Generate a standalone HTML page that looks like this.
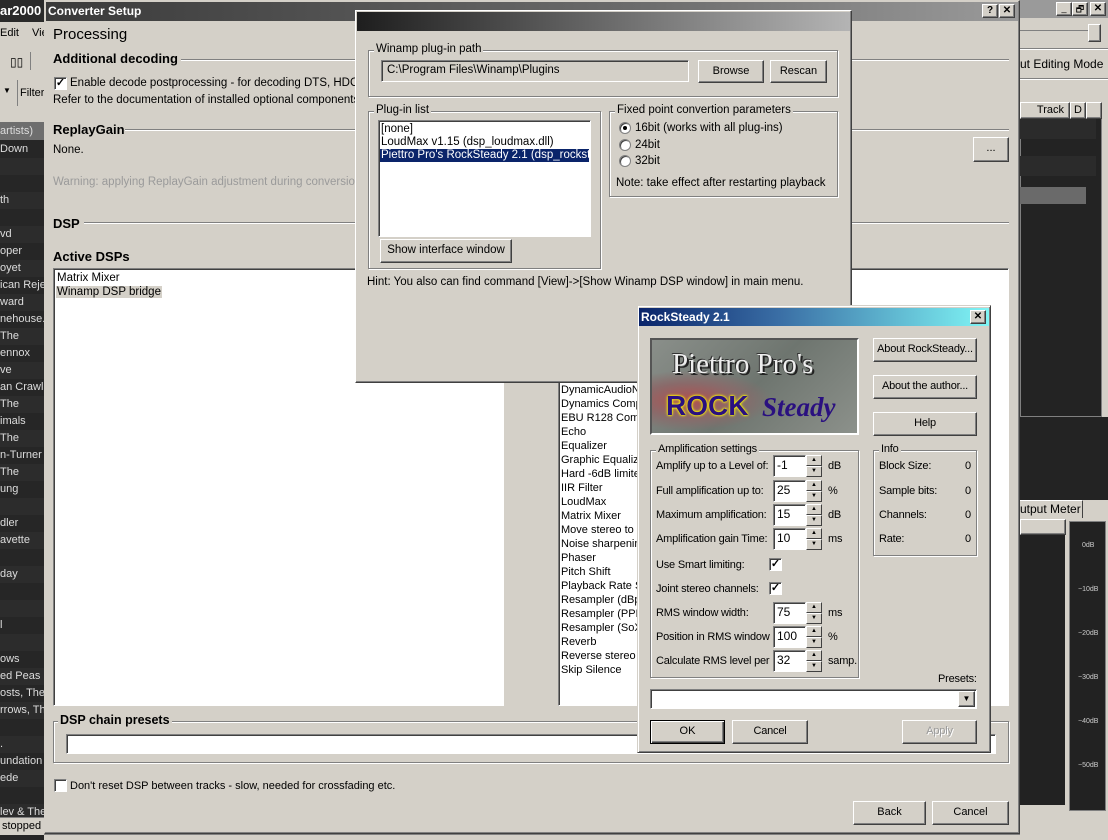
<!DOCTYPE html>
<html><head><meta charset="utf-8">
<style>
*{box-sizing:border-box;margin:0;padding:0}
body{width:1108px;height:840px;position:relative;overflow:hidden;background:#d4d0c8;font-family:"Liberation Sans",sans-serif;font-size:11px;color:#000}
.a{position:absolute}
.t{position:absolute;white-space:nowrap}
.b{position:absolute;background:#d4d0c8;border:1px solid;border-color:#fff #404040 #404040 #fff;box-shadow:inset -1px -1px 0 #808080;text-align:center;white-space:nowrap}
.s{position:absolute;background:#fff;border:1px solid;border-color:#808080 #fff #fff #808080;box-shadow:inset 1px 1px 0 #404040}
.g{position:absolute;border:1px solid #808080;box-shadow:1px 1px 0 #fff,inset 1px 1px 0 #fff}
.gl{position:absolute;background:#d4d0c8;padding:0 2px;white-space:nowrap;top:-8px;left:5px}
.h{position:absolute;height:2px;border-top:1px solid #808080;border-bottom:1px solid #fff}
.cb{position:absolute;width:13px;height:13px;background:#fff;border:1px solid;border-color:#808080 #fff #fff #808080;box-shadow:inset 1px 1px 0 #404040;font-size:11px;line-height:11px;text-align:center;font-weight:bold}
.bold{font-weight:bold;font-size:13px}
.row{position:absolute;left:0;width:44px;height:17px;color:#ddd;font-size:11px;line-height:17px;overflow:hidden;white-space:nowrap}
.spin{position:absolute;width:49px;height:22px}
.spin .f{position:absolute;left:0;top:0;width:33px;height:22px;background:#fff;border:1px solid;border-color:#808080 #fff #fff #808080;box-shadow:inset 1px 1px 0 #404040;padding:2px 0 0 3px;font-size:12px}
.spin .u,.spin .d{position:absolute;left:33px;width:16px;height:11px;background:#d4d0c8;border:1px solid;border-color:#fff #404040 #404040 #fff;font-size:6px;line-height:9px;text-align:center}
.spin .u{top:0}.spin .d{top:11px}
.r{position:absolute;width:12px;height:12px;border-radius:50%;background:#fff;border:1px solid #808080;box-shadow:inset 1px 1px 0 #404040}
.rs{font-size:11px;letter-spacing:-0.2px}
</style></head><body>

<!-- left foobar area -->
<div class="a" style="left:0;top:0;width:44px;height:840px;background:#262626"></div>
<div class="a" style="left:0;top:0;width:44px;height:22px;background:#2a2a2a"></div>
<div class="t" style="left:0;top:3px;color:#fff;font-weight:bold;font-size:13px">ar2000</div>
<div class="a" style="left:0;top:22px;width:44px;height:100px;background:#d4d0c8"></div>
<div class="t" style="left:0;top:27px">Edit</div><div class="t" style="left:32px;top:27px">Vie</div>
<div class="t" style="left:10px;top:55px;font-size:12px">▯▯</div>
<div class="a" style="left:30px;top:52px;width:1px;height:18px;background:#808080"></div>
<div class="t" style="left:3px;top:86px;font-size:8px">▼</div>
<div class="a" style="left:17px;top:80px;width:1px;height:26px;background:#808080"></div>
<div class="t" style="left:20px;top:87px">Filter</div>
<div class="a" style="left:0;top:122px;width:44px;height:18px;background:#6e6e6e"></div>
<div class="t" style="left:0;top:125px;color:#ddd">artists)</div>
<div class="row" style="top:141px">Down</div>
<div class="row" style="top:158px;background:#2c2c2c"></div>
<div class="row" style="top:175px"></div>
<div class="row" style="top:192px;background:#2c2c2c">th</div>
<div class="row" style="top:209px"></div>
<div class="row" style="top:226px;background:#2c2c2c">vd</div>
<div class="row" style="top:243px">oper</div>
<div class="row" style="top:260px;background:#2c2c2c">oyet</div>
<div class="row" style="top:277px">ican Reje</div>
<div class="row" style="top:294px;background:#2c2c2c">ward</div>
<div class="row" style="top:311px">nehouse.</div>
<div class="row" style="top:328px;background:#2c2c2c">The</div>
<div class="row" style="top:345px">ennox</div>
<div class="row" style="top:362px;background:#2c2c2c">ve</div>
<div class="row" style="top:379px">an Crawl</div>
<div class="row" style="top:396px;background:#2c2c2c">The</div>
<div class="row" style="top:413px">imals</div>
<div class="row" style="top:430px;background:#2c2c2c">The</div>
<div class="row" style="top:447px">n-Turner</div>
<div class="row" style="top:464px;background:#2c2c2c"> The</div>
<div class="row" style="top:481px">ung</div>
<div class="row" style="top:498px;background:#2c2c2c"></div>
<div class="row" style="top:515px">dler</div>
<div class="row" style="top:532px;background:#2c2c2c">avette</div>
<div class="row" style="top:549px"></div>
<div class="row" style="top:566px;background:#2c2c2c">day</div>
<div class="row" style="top:583px"></div>
<div class="row" style="top:600px;background:#2c2c2c"></div>
<div class="row" style="top:617px">l</div>
<div class="row" style="top:634px;background:#2c2c2c"></div>
<div class="row" style="top:651px">ows</div>
<div class="row" style="top:668px;background:#2c2c2c">ed Peas</div>
<div class="row" style="top:685px">osts, The</div>
<div class="row" style="top:702px;background:#2c2c2c">rrows, Th</div>
<div class="row" style="top:719px"></div>
<div class="row" style="top:736px;background:#2c2c2c">.</div>
<div class="row" style="top:753px">undation</div>
<div class="row" style="top:770px;background:#2c2c2c">ede</div>
<div class="row" style="top:787px"></div>
<div class="row" style="top:804px;background:#2c2c2c">lev &amp; The</div>
<div class="a" style="left:0;top:817px;width:44px;height:18px;background:#d4d0c8;border-top:1px solid #808080"></div>
<div class="t" style="left:2px;top:820px">stopped</div>

<!-- right foobar area -->
<div class="a" style="left:1020px;top:0;width:88px;height:840px;background:#d4d0c8"></div>
<div class="a" style="left:1020px;top:0;width:88px;height:18px;background:#9a9a9a"></div>
<div class="b" style="left:1056px;top:2px;width:16px;height:14px;font-size:9px;line-height:10px">_</div>
<div class="b" style="left:1072px;top:2px;width:16px;height:14px;font-size:9px;line-height:12px">🗗</div>
<div class="b" style="left:1090px;top:2px;width:16px;height:14px;font-size:10px;line-height:12px;font-weight:bold">✕</div>
<div class="a" style="left:1020px;top:30px;width:70px;height:1px;background:#808080"></div>
<div class="b" style="left:1088px;top:24px;width:13px;height:18px"></div>
<div class="h" style="left:1020px;top:48px;width:88px"></div>
<div class="t" style="left:1020px;top:57px;font-size:12px">ut Editing Mode</div>
<div class="h" style="left:1020px;top:78px;width:88px"></div>
<div class="a" style="left:1020px;top:102px;width:82px;height:315px;background:#232323;border:1px solid #808080"></div>
<div class="a" style="left:1020px;top:417px;width:88px;height:83px;background:#232323"></div>
<div class="b" style="left:1020px;top:102px;width:50px;height:17px;text-align:right;padding-right:5px;line-height:15px">Track</div>
<div class="b" style="left:1070px;top:102px;width:16px;height:17px;line-height:15px">D</div>
<div class="b" style="left:1086px;top:102px;width:16px;height:17px"></div>
<div class="a" style="left:1020px;top:119px;width:76px;height:20px;background:#2b2b2b"></div>
<div class="a" style="left:1020px;top:156px;width:76px;height:20px;background:#2b2b2b"></div>
<div class="a" style="left:1020px;top:187px;width:66px;height:17px;background:#6a6a6a"></div>
<div class="a" style="left:1020px;top:500px;width:63px;height:18px;background:#d4d0c8;border-top:1px solid #fff;border-right:1px solid #404040"></div>
<div class="t" style="left:1020px;top:502px;font-size:12px">utput Meter</div>
<div class="a" style="left:1020px;top:518px;width:88px;height:300px;background:#d4d0c8"></div>
<div class="b" style="left:1020px;top:519px;width:46px;height:16px"></div>
<div class="a" style="left:1020px;top:535px;width:45px;height:270px;background:#222"></div>
<div class="a" style="left:1069px;top:521px;width:37px;height:290px;background:#222;border:1px solid #808080"></div>
<div class="t" style="left:1082px;top:542px;color:#ccc;font-size:7px">0dB</div>
<div class="t" style="left:1078px;top:586px;color:#ccc;font-size:7px">−10dB</div>
<div class="t" style="left:1078px;top:630px;color:#ccc;font-size:7px">−20dB</div>
<div class="t" style="left:1078px;top:674px;color:#ccc;font-size:7px">−30dB</div>
<div class="t" style="left:1078px;top:718px;color:#ccc;font-size:7px">−40dB</div>
<div class="t" style="left:1078px;top:762px;color:#ccc;font-size:7px">−50dB</div>

<!-- Converter Setup dialog -->
<div class="a" style="left:44px;top:0;width:976px;height:834px;background:#d4d0c8;border:1px solid;border-color:#d4d0c8 #404040 #404040 #d4d0c8;box-shadow:inset -1px -1px 0 #808080"></div>
<div class="a" style="left:46px;top:2px;width:972px;height:19px;background:linear-gradient(90deg,#3a3a3a,#6a6a6a 60%,#9a9a9a)"></div>
<div class="t" style="left:48px;top:4px;color:#fff;font-weight:bold;font-size:12px">Converter Setup</div>
<div class="b" style="left:982px;top:4px;width:16px;height:14px;font-weight:bold;font-size:10px;line-height:12px">?</div>
<div class="b" style="left:999px;top:4px;width:16px;height:14px;font-weight:bold;font-size:10px;line-height:12px">✕</div>
<div class="t" style="left:53px;top:26px;font-size:15px">Processing</div>
<div class="t bold" style="left:53px;top:51px">Additional decoding</div>
<div class="h" style="left:181px;top:59px;width:828px"></div>
<div class="cb" style="left:54px;top:77px">✓</div>
<div class="t" style="left:70px;top:77px;font-size:11.5px">Enable decode postprocessing - for decoding DTS, HDCD, e</div>
<div class="t" style="left:53px;top:94px;font-size:11.5px">Refer to the documentation of installed optional components fo</div>
<div class="t bold" style="left:53px;top:122px">ReplayGain</div>
<div class="h" style="left:125px;top:129px;width:884px"></div>
<div class="t" style="left:53px;top:144px;font-size:11.5px">None.</div>
<div class="t" style="left:53px;top:176px;font-size:11.5px;color:#9a9a9a">Warning: applying ReplayGain adjustment during conversion wi</div>
<div class="b" style="left:973px;top:137px;width:36px;height:25px;line-height:20px">...</div>
<div class="t bold" style="left:53px;top:216px">DSP</div>
<div class="h" style="left:84px;top:222px;width:925px"></div>
<div class="t bold" style="left:53px;top:249px">Active DSPs</div>
<div class="s" style="left:53px;top:268px;width:451px;height:438px"></div>
<div class="t" style="left:57px;top:272px;font-size:11.5px">Matrix Mixer</div>
<div class="t" style="left:56px;top:286px;font-size:11.5px;background:#d4d0c8;padding:0 1px">Winamp DSP bridge</div>
<div class="s" style="left:558px;top:268px;width:451px;height:438px"></div>
<div class="a" style="left:561px;top:383px;font-size:11px;line-height:14px;white-space:pre">DynamicAudioN
Dynamics Comp
EBU R128 Comp
Echo
Equalizer
Graphic Equalize
Hard -6dB limite
IIR Filter
LoudMax
Matrix Mixer
Move stereo to
Noise sharpenin
Phaser
Pitch Shift
Playback Rate S
Resampler (dBp
Resampler (PPH
Resampler (SoX
Reverb
Reverse stereo
Skip Silence</div>
<div class="g" style="left:53px;top:721px;width:956px;height:42px"><span class="gl bold" style="font-size:12.5px;left:4px;top:-9px">DSP chain presets</span></div>
<div class="s" style="left:66px;top:734px;width:930px;height:20px"></div>
<div class="cb" style="left:54px;top:779px"></div>
<div class="t" style="left:70px;top:780px">Don't reset DSP between tracks - slow, needed for crossfading etc.</div>
<div class="b" style="left:853px;top:801px;width:73px;height:24px;line-height:21px">Back</div>
<div class="b" style="left:932px;top:801px;width:77px;height:24px;line-height:21px">Cancel</div>
<div class="a" style="left:44px;top:834px;width:976px;height:6px;background:#d4d0c8;border-top:1px solid #808080"></div>

<!-- Winamp DSP window -->
<div class="a" style="left:355px;top:10px;width:497px;height:373px;background:#d4d0c8;border:1px solid;border-color:#fff #404040 #404040 #fff;box-shadow:inset -1px -1px 0 #808080"></div>
<div class="a" style="left:357px;top:12px;width:493px;height:19px;background:linear-gradient(90deg,#1e1e1e,#5a5a5a 40%,#b4b4b4)"></div>
<div class="g" style="left:368px;top:50px;width:470px;height:47px"><span class="gl" style="font-size:11.5px">Winamp plug-in path</span></div>
<div class="s" style="left:381px;top:60px;width:308px;height:22px;background:#d4d0c8;padding:3px 5px;font-size:11.5px">C:\Program Files\Winamp\Plugins</div>
<div class="b" style="left:698px;top:60px;width:66px;height:23px;line-height:20px">Browse</div>
<div class="b" style="left:770px;top:60px;width:57px;height:23px;line-height:20px">Rescan</div>
<div class="g" style="left:368px;top:111px;width:233px;height:158px"><span class="gl" style="font-size:11.5px">Plug-in list</span></div>
<div class="s" style="left:378px;top:120px;width:213px;height:117px;overflow:hidden;padding:2px 1px;font-size:11.5px;line-height:13px">
<div style="padding-left:1px">[none]</div><div style="padding-left:1px">LoudMax v1.15 (dsp_loudmax.dll)</div><div style="background:#0a246a;color:#fff;white-space:nowrap;padding-left:1px">Piettro Pro's RockSteady 2.1 (dsp_rocksteady.dll)</div></div>
<div class="b" style="left:380px;top:239px;width:132px;height:24px;line-height:21px;font-size:11.5px">Show interface window</div>
<div class="g" style="left:609px;top:111px;width:229px;height:86px"><span class="gl" style="font-size:11.5px">Fixed point convertion parameters</span></div>
<div class="r" style="left:619px;top:122px"><div class="a" style="left:3px;top:3px;width:4px;height:4px;background:#000;border-radius:50%"></div></div>
<div class="t" style="left:635px;top:122px;font-size:11.5px">16bit (works with all plug-ins)</div>
<div class="r" style="left:619px;top:139px"></div><div class="t" style="left:635px;top:139px;font-size:11.5px">24bit</div>
<div class="r" style="left:619px;top:155px"></div><div class="t" style="left:635px;top:155px;font-size:11.5px">32bit</div>
<div class="t" style="left:616px;top:177px;font-size:11.5px">Note: take effect after restarting playback</div>
<div class="t" style="left:367px;top:276px;font-size:11.5px">Hint: You also can find command [View]-&gt;[Show Winamp DSP window] in main menu.</div>

<!-- RockSteady window -->
<div class="a" style="left:637px;top:305px;width:354px;height:448px;background:#d4d0c8;border:1px solid;border-color:#d4d0c8 #404040 #404040 #d4d0c8;box-shadow:inset 1px 1px 0 #fff,inset -1px -1px 0 #808080"></div>
<div class="a" style="left:639px;top:308px;width:350px;height:18px;background:linear-gradient(90deg,#0a246a,#3a6ea5 40%,#7ff5f5)"></div>
<div class="t" style="left:641px;top:310px;color:#fff;font-weight:bold;font-size:12px">RockSteady 2.1</div>
<div class="b" style="left:970px;top:310px;width:16px;height:14px;font-weight:bold;font-size:10px;line-height:12px">✕</div>
<div class="a" style="left:650px;top:338px;width:209px;height:97px;border:2px solid;border-color:#555 #fff #fff #555;background:radial-gradient(ellipse at 18% 65%,#b05050 0,#8a6a6a 20%,transparent 35%),linear-gradient(135deg,#8a8f8a,#6e756f 50%,#8c918b);overflow:hidden">
<div class="t" style="left:20px;top:8px;font-family:'Liberation Serif',serif;font-size:29px;color:#eee;text-shadow:2px 2px 0 #222,-1px -1px 0 #333">Piettro Pro's</div>
<div class="t" style="left:14px;top:50px;font-family:'Liberation Sans',sans-serif;font-weight:bold;font-size:28px;color:#2a1080;text-shadow:0 0 3px #ff0,0 0 2px #ff0,0 0 1px #ff0">ROCK</div>
<div class="t" style="left:110px;top:52px;font-family:'Liberation Serif',serif;font-style:italic;font-weight:bold;font-size:27px;color:#2a1080">Steady</div>
</div>
<div class="b rs" style="left:873px;top:338px;width:104px;height:24px;line-height:21px">About RockSteady...</div>
<div class="b rs" style="left:873px;top:375px;width:104px;height:24px;line-height:21px">About the author...</div>
<div class="b rs" style="left:873px;top:412px;width:104px;height:24px;line-height:21px">Help</div>
<div class="g" style="left:650px;top:450px;width:209px;height:228px"><span class="gl rs" style="left:5px">Amplification settings</span></div>
<div class="t rs" style="left:656px;top:460px">Amplify up to a Level of:</div>
<div class="spin" style="left:773px;top:455px"><div class="f">-1</div><div class="u">▲</div><div class="d">▼</div></div><div class="t rs" style="left:828px;top:460px">dB</div>
<div class="t rs" style="left:656px;top:485px">Full amplification up to:</div>
<div class="spin" style="left:773px;top:480px"><div class="f">25</div><div class="u">▲</div><div class="d">▼</div></div><div class="t rs" style="left:828px;top:485px">%</div>
<div class="t rs" style="left:656px;top:509px">Maximum amplification:</div>
<div class="spin" style="left:773px;top:504px"><div class="f">15</div><div class="u">▲</div><div class="d">▼</div></div><div class="t rs" style="left:828px;top:509px">dB</div>
<div class="t rs" style="left:656px;top:533px">Amplification gain Time:</div>
<div class="spin" style="left:773px;top:528px"><div class="f">10</div><div class="u">▲</div><div class="d">▼</div></div><div class="t rs" style="left:828px;top:533px">ms</div>
<div class="t rs" style="left:656px;top:559px">Use Smart limiting:</div>
<div class="cb" style="left:769px;top:558px">✓</div>
<div class="t rs" style="left:656px;top:583px">Joint stereo channels:</div>
<div class="cb" style="left:769px;top:582px">✓</div>
<div class="t rs" style="left:656px;top:607px">RMS window width:</div>
<div class="spin" style="left:773px;top:602px"><div class="f">75</div><div class="u">▲</div><div class="d">▼</div></div><div class="t rs" style="left:828px;top:607px">ms</div>
<div class="t rs" style="left:656px;top:631px">Position in RMS window</div>
<div class="spin" style="left:773px;top:626px"><div class="f">100</div><div class="u">▲</div><div class="d">▼</div></div><div class="t rs" style="left:828px;top:631px">%</div>
<div class="t rs" style="left:656px;top:655px">Calculate RMS level per</div>
<div class="spin" style="left:773px;top:650px"><div class="f">32</div><div class="u">▲</div><div class="d">▼</div></div><div class="t rs" style="left:828px;top:655px">samp.</div>
<div class="g" style="left:873px;top:450px;width:104px;height:106px"><span class="gl rs" style="left:5px">Info</span></div>
<div class="t rs" style="left:879px;top:460px">Block Size:</div><div class="t rs" style="left:965px;top:460px">0</div>
<div class="t rs" style="left:879px;top:485px">Sample bits:</div><div class="t rs" style="left:965px;top:485px">0</div>
<div class="t rs" style="left:879px;top:509px">Channels:</div><div class="t rs" style="left:965px;top:509px">0</div>
<div class="t rs" style="left:879px;top:533px">Rate:</div><div class="t rs" style="left:965px;top:533px">0</div>
<div class="t rs" style="left:938px;top:673px">Presets:</div>
<div class="s" style="left:650px;top:689px;width:327px;height:20px"></div>
<div class="b" style="left:958px;top:691px;width:17px;height:16px;font-size:8px;line-height:14px">▼</div>
<div class="b" style="left:650px;top:720px;width:75px;height:24px;line-height:20px;border:1px solid #000;box-shadow:inset 1px 1px 0 #fff,inset -1px -1px 0 #404040,inset -2px -2px 0 #808080">OK</div>
<div class="b rs" style="left:732px;top:720px;width:76px;height:24px;line-height:21px">Cancel</div>
<div class="b rs" style="left:902px;top:720px;width:75px;height:24px;line-height:21px;color:#9a9a9a;text-shadow:1px 1px 0 #fff">Apply</div>
</body></html>
